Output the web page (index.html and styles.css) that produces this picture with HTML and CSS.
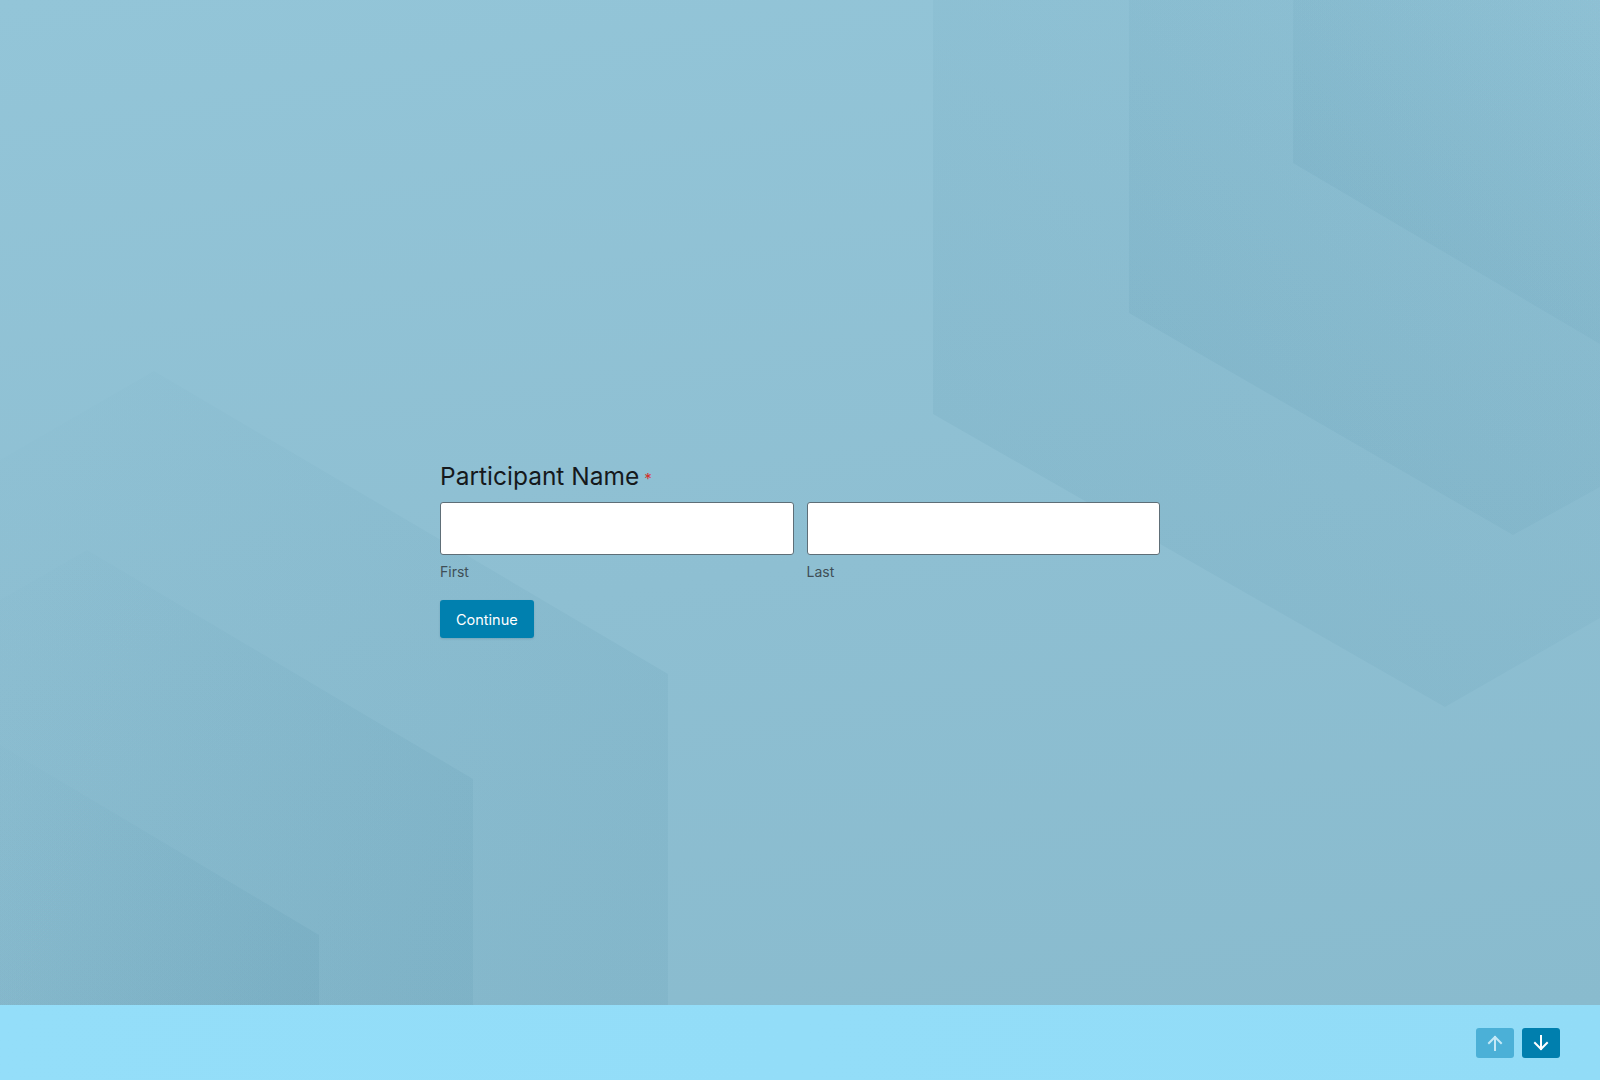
FILE: index.html
```html
<!DOCTYPE html>
<html lang="en">
<head>
<meta charset="utf-8">
<title>Participant Name</title>
<link rel="stylesheet" href="styles.css">
</head>
<body>
<div class="page">
  <main class="stage">
    <svg class="backdrop" width="1600" height="1005" viewBox="0 0 1600 1005" preserveAspectRatio="none" aria-hidden="true">
      <defs>
        <linearGradient id="gl" x1="0" y1="0.35" x2="1" y2="0.65">
          <stop offset="0" stop-color="#2a6f8c" stop-opacity="0.012"/>
          <stop offset="1" stop-color="#2a6f8c" stop-opacity="0.07"/>
        </linearGradient>
        <linearGradient id="gr" x1="1" y1="0" x2="0" y2="1">
          <stop offset="0" stop-color="#2a6f8c" stop-opacity="0.01"/>
          <stop offset="1" stop-color="#2a6f8c" stop-opacity="0.085"/>
        </linearGradient>
      </defs>
      <polygon points="0,460 154,371 668,674 668,1005 0,1005" fill="url(#gl)"/>
      <polygon points="0,600 87,550 473,779 473,1005 0,1005" fill="url(#gl)"/>
      <polygon points="0,745 319,935 319,1005 0,1005" fill="url(#gl)"/>
      <polygon points="933,0 933,414 1445,707 1600,618 1600,0" fill="url(#gr)"/>
      <polygon points="1129,0 1129,313 1513,535 1600,487 1600,0" fill="url(#gr)"/>
      <polygon points="1293,0 1293,163 1600,344 1600,0" fill="url(#gr)"/>
    </svg>

    <form class="form">
      <div class="field">
        <h1 class="field-label">Participant Name <span class="req">*</span></h1>
        <div class="name-row">
          <div class="name-part">
            <input class="text-input" type="text" aria-label="First">
            <span class="sub-label">First</span>
          </div>
          <div class="name-part">
            <input class="text-input" type="text" aria-label="Last">
            <span class="sub-label">Last</span>
          </div>
        </div>
      </div>
      <div class="actions">
        <button type="button" class="btn-continue">Continue</button>
      </div>
    </form>
  </main>

  <footer class="footer">
    <div class="nav">
      <button type="button" class="nav-btn nav-up" aria-label="Previous">
        <svg width="16" height="16" viewBox="0 0 16 16" fill="none" stroke="currentColor" stroke-width="2" stroke-linecap="square" stroke-linejoin="miter"><path d="M8 15V2"/><path d="M2 8l6-6 6 6"/></svg>
      </button>
      <button type="button" class="nav-btn nav-down" aria-label="Next">
        <svg width="16" height="16" viewBox="0 0 16 16" fill="none" stroke="currentColor" stroke-width="2" stroke-linecap="square" stroke-linejoin="miter"><path d="M8 1v13"/><path d="M2 8l6 6 6-6"/></svg>
      </button>
    </div>
  </footer>
</div>
</body>
</html>
```

FILE: styles.css
```css
* { box-sizing: border-box; }

html, body {
  margin: 0;
  padding: 0;
  height: 100%;
}

body {
  font-family: Inter, "Noto Sans", "Liberation Sans", sans-serif;
  color: #1d2124;
  background: #8dc0d3;
  overflow: hidden;
}

.page {
  display: flex;
  flex-direction: column;
  height: 1080px;
}

.stage {
  position: relative;
  flex: 0 0 1005px;
  height: 1005px;
  background: linear-gradient(172deg, #93c5d8 0%, #8ebfd2 55%, #89bbce 100%);
  display: flex;
  justify-content: center;
  align-items: flex-start;
  padding-top: 461px;
  overflow: hidden;
}

.backdrop {
  position: absolute;
  left: 0;
  top: 0;
  z-index: 0;
}

.form {
  position: relative;
  z-index: 1;
  width: 720px;
  display: flex;
  flex-direction: column;
}

.field-label {
  margin: 0;
  font-size: 24.5px;
  font-weight: 400;
  line-height: 30px;
  color: #15191c;
  letter-spacing: 0;
}

.req {
  color: #d5322b;
  font-size: 15px;
  vertical-align: 1px;
  margin-left: -2px;
}

.name-row {
  display: flex;
  gap: 13px;
  margin-top: 8px;
}

.name-part {
  flex: 1;
  display: flex;
  flex-direction: column;
}

.text-input {
  height: 53px;
  width: 100%;
  border: 1px solid #5e6e77;
  border-radius: 3px;
  background: #fff;
  font: inherit;
  padding: 0 12px;
}

.sub-label {
  margin-top: 8px;
  font-size: 14px;
  line-height: 18px;
  color: #3f4f57;
}

.actions {
  margin-top: 19px;
}

.btn-continue {
  height: 38px;
  padding: 0 16px;
  border: none;
  border-radius: 3px;
  background: #0080af;
  color: #fff;
  font-family: inherit;
  font-size: 14.5px;
  font-weight: 400;
  cursor: pointer;
  box-shadow: 0 1px 2px rgba(0, 50, 80, 0.15);
}

.footer {
  flex: 1;
  background: linear-gradient(100deg, #94def9 0%, #92dcf7 100%);
  display: flex;
  justify-content: flex-end;
  align-items: flex-start;
  padding: 23px 40px 0 0;
}

.nav {
  display: flex;
  gap: 8px;
}

.nav-btn {
  width: 38px;
  height: 30px;
  border: none;
  border-radius: 3px;
  display: flex;
  align-items: center;
  justify-content: center;
  padding: 0;
  cursor: pointer;
}

.nav-up {
  background: #4bb0d7;
  color: #c4e9f7;
}

.nav-down {
  background: #007fae;
  color: #ffffff;
}
```
